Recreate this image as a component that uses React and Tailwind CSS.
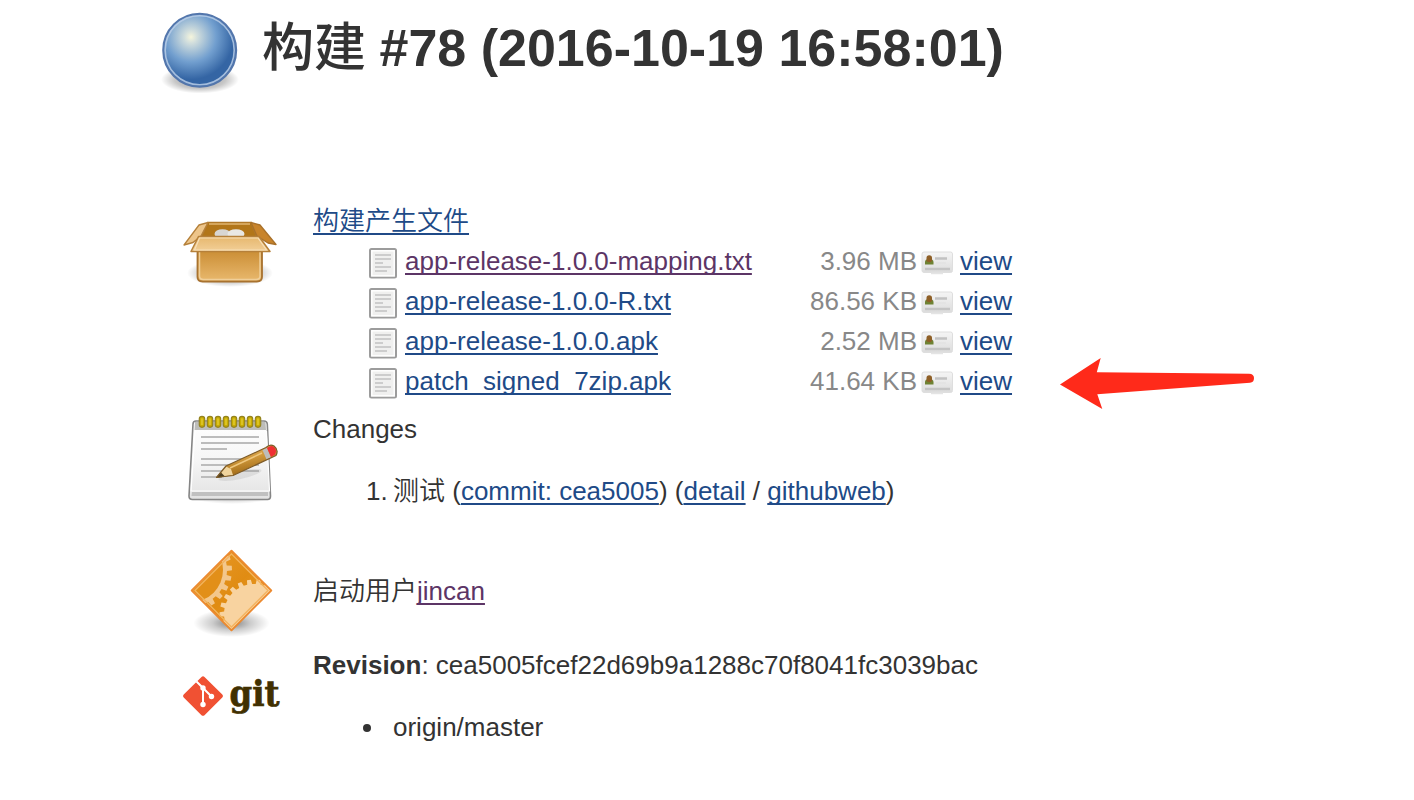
import React from "react";

const files = [
  { name: "app-release-1.0.0-mapping.txt", size: "3.96 MB", visited: true },
  { name: "app-release-1.0.0-R.txt", size: "86.56 KB" },
  { name: "app-release-1.0.0.apk", size: "2.52 MB" },
  { name: "patch_signed_7zip.apk", size: "41.64 KB" },
];

function Link({ children, visited }) {
  return (
    <a
      href="#"
      className={
        "underline decoration-2 underline-offset-[3px] [text-decoration-skip-ink:none] " +
        (visited ? "text-[#5c3566]" : "text-[#204a87]")
      }
    >
      {children}
    </a>
  );
}

function BallIcon() {
  return (
    <svg width="80" height="88" viewBox="160 8 80 88" className="block shrink-0">
      <defs>
        <radialGradient id="ball" cx="191" cy="37" r="50" gradientUnits="userSpaceOnUse">
          <stop offset="0" stopColor="#f5f5dc" />
          <stop offset="0.12" stopColor="#d3dfdd" />
          <stop offset="0.5" stopColor="#729fcf" />
          <stop offset="0.85" stopColor="#3465a4" />
          <stop offset="1" stopColor="#3465a4" />
        </radialGradient>
        <radialGradient id="ballShade">
          <stop offset="0" stopColor="#000" stopOpacity="0.4" />
          <stop offset="0.65" stopColor="#000" stopOpacity="0.22" />
          <stop offset="1" stopColor="#000" stopOpacity="0" />
        </radialGradient>
      </defs>
      <ellipse cx="200" cy="79.500" rx="39" ry="14" fill="url(#ballShade)" />
      <circle cx="199.700" cy="50.200" r="36.500" fill="url(#ball)" stroke="#5376ac" strokeWidth="2" />
      <circle cx="199.700" cy="50.200" r="34.500" fill="none" stroke="#b9cde6" strokeOpacity="0.85" strokeWidth="1.600" />
    </svg>
  );
}

function BoxIcon() {
  return (
    <svg width="100" height="76" viewBox="180 214 100 76" className="block">
      <defs>
        <linearGradient id="boxFront" x1="0" y1="0" x2="0" y2="1">
          <stop offset="0" stopColor="#c88a30" />
          <stop offset="1" stopColor="#e9b96e" />
        </linearGradient>
        <linearGradient id="boxFlap" x1="0" y1="0" x2="0" y2="1">
          <stop offset="0" stopColor="#e6b76d" />
          <stop offset="1" stopColor="#f2cf98" />
        </linearGradient>
        <radialGradient id="boxShade">
          <stop offset="0" stopColor="#000" stopOpacity="0.5" />
          <stop offset="0.65" stopColor="#000" stopOpacity="0.2" />
          <stop offset="1" stopColor="#000" stopOpacity="0" />
        </radialGradient>
      </defs>
      <ellipse cx="230" cy="273" rx="43" ry="14" fill="url(#boxShade)" />
      <path d="M208 222.500H251L257 238H201Z" fill="#b27619" stroke="#b07828" strokeWidth="1.500" />
      <path d="M209 224H250" stroke="#e0b671" strokeWidth="1.500" />
      <ellipse cx="222.500" cy="234" rx="8" ry="4.800" fill="#d8d6d2" />
      <ellipse cx="236" cy="234" rx="8.500" ry="4.800" fill="#e9e8e4" />
      <path d="M251 222.500L260 225L276 244.500L268 243L257 236Z" fill="#c8842b" stroke="#a9712a" strokeWidth="1.300" strokeLinejoin="round" />
      <path d="M208 222.500L199 225L184 245L193 242.500L201 236Z" fill="#edc58a" stroke="#b5803a" strokeWidth="1.300" strokeLinejoin="round" />
      <path d="M197.500 248H262V277Q262 281.500 257 281.500H202.500Q197.500 281.500 197.500 277Z" fill="url(#boxFront)" stroke="#a8722f" strokeWidth="1.800" />
      <path d="M199.500 252V276Q199.500 279.500 203.500 279.500H256Q260 279.500 260 276V252" fill="none" stroke="#f0cf99" strokeWidth="1.500" />
      <path d="M198.500 236.500H259L270 251.500H191Z" fill="url(#boxFlap)" stroke="#b5803a" strokeWidth="1.500" strokeLinejoin="round" />
      <path d="M199.500 238H258L266.500 250H194.500Z" fill="none" stroke="#f7dfb8" strokeWidth="1.200" />
    </svg>
  );
}

function NotepadIcon() {
  return (
    <svg width="100" height="100" viewBox="180 407 100 100" className="block">
      <defs>
        <linearGradient id="paper" x1="0" y1="0" x2="0" y2="1">
          <stop offset="0" stopColor="#fff" />
          <stop offset="0.5" stopColor="#f6f6f6" />
          <stop offset="1" stopColor="#e2e2e2" />
        </linearGradient>
        <linearGradient id="pencil" x1="0" y1="0" x2="0.350" y2="1">
          <stop offset="0" stopColor="#e9bb6b" />
          <stop offset="0.5" stopColor="#d19a3d" />
          <stop offset="1" stopColor="#9a6412" />
        </linearGradient>
        <radialGradient id="padShade">
          <stop offset="0" stopColor="#000" stopOpacity="0.25" />
          <stop offset="1" stopColor="#000" stopOpacity="0" />
        </radialGradient>
      </defs>
      <ellipse cx="232" cy="497" rx="40" ry="7" fill="url(#padShade)" />
      <path d="M196 421H264Q267 421 267.300 424L270.500 496Q270.500 499.500 267.500 499.500H192.500Q189 499.500 189 496L193 424Q193 421 196 421Z" fill="url(#paper)" stroke="#858585" strokeWidth="1.600" />
      <path d="M195 422H265.500L266 430H194.500Z" fill="#bdbdba" />
      <path d="M192 492H268V496H191.500Z" fill="#c0c0c0" />
      <path d="M195 431L191 491H269.500L266.500 431" fill="none" stroke="#fff" strokeWidth="1.200" />
      <g stroke="#bcbcbc" strokeWidth="2">
        <path d="M201 437H259M201 443H259M201 449H227M201 459H259M201 465H259M201 471H259M201 477H222" />
      </g>
      {[202, 210, 218, 226, 234, 242, 250, 258].map((x) => (
        <g key={x}>
          <rect x={x - 2.7} y="416.300" width="5.400" height="11" rx="2.700" fill="#c9ac00" stroke="#94831f" strokeWidth="1.200" />
          <path d={`M${x} 418.500V425`} stroke="#e3cd36" strokeWidth="1.400" />
        </g>
      ))}
      <ellipse cx="240" cy="475" rx="22" ry="4" fill="#777" opacity="0.15" transform="rotate(-12 240 475)" />
      <path d="M216.500 477.500L226 466L266 447.500Q270 443.500 274 446Q279 450 276 455.500L233 475.500Z" fill="url(#pencil)" />
      <path d="M216.500 477.500L226 466.500L231 469L233 475Z" fill="#f0d49d" />
      <path d="M216 478L220.500 472L225 476.500Z" fill="#4a3d20" />
      <path d="M262.500 450L267 447.800L271 457.500L266.500 459.500Z" fill="#bdbdbb" />
      <path d="M267 448Q271 444.500 274 447Q277.500 450 275 454.500L271 457Z" fill="#ef2f32" />
      <path d="M216.500 477.500L226 466L266 447.500Q270 443.500 274 446Q279 450 276 455.500L233 475.500Z" fill="none" stroke="#7d5b28" strokeWidth="1.200" strokeLinejoin="round" />
      <path d="M230 468L262 453" stroke="#efc77e" strokeWidth="1.500" />
    </svg>
  );
}

// Outline of a toothed wheel centred on (cx, cy).
function gearPath(cx, cy, inner, outer, teeth, phase) {
  const points = [];
  for (let i = 0; i < teeth; i += 1) {
    const step = (Math.PI * 2) / teeth;
    const a = i * step + phase;
    [
      [0, inner],
      [0.42, inner],
      [0.5, outer],
      [0.9, outer],
    ].forEach(([t, r]) => {
      points.push(`${(cx + r * Math.cos(a + t * step)).toFixed(2)} ${(cy + r * Math.sin(a + t * step)).toFixed(2)}`);
    });
  }
  return `M${points.join("L")}Z`;
}

function GearsIcon() {
  return (
    <svg width="100" height="94" viewBox="180 546 100 94" className="block">
      <defs>
        <clipPath id="diamond">
          <path d="M231.500 552L270 590.500L231.500 629L193 590.500Z" />
        </clipPath>
        <linearGradient id="amber" x1="0" y1="0" x2="1" y2="1">
          <stop offset="0" stopColor="#e99a2c" />
          <stop offset="0.5" stopColor="#e08c13" />
          <stop offset="1" stopColor="#f0a23b" />
        </linearGradient>
        <radialGradient id="gearShade">
          <stop offset="0" stopColor="#000" stopOpacity="0.5" />
          <stop offset="0.5" stopColor="#000" stopOpacity="0.2" />
          <stop offset="1" stopColor="#000" stopOpacity="0" />
        </radialGradient>
      </defs>
      <ellipse cx="231.500" cy="623" rx="38" ry="14" fill="url(#gearShade)" />
      <path d="M231.500 550.800L271.200 590.500L231.500 630.200L191.800 590.500Z" fill="url(#amber)" stroke="#ec8a30" strokeWidth="2" strokeLinejoin="round" />
      <g clipPath="url(#diamond)">
        <path d={gearPath(191, 570, 36, 41, 24, 0.03)} fill="#f3c78c" />
        <circle cx="191" cy="570" r="32" fill="#e28f19" />
        <path d={gearPath(254, 614, 30, 34.5, 22, 0.08)} fill="#f8d3a0" />
      </g>
      <path d="M231.500 554L268 590.500L231.500 627L195 590.500Z" fill="none" stroke="#f3b35f" strokeWidth="1.300" />
    </svg>
  );
}

function GitLogo() {
  return (
    <svg width="110" height="64" viewBox="180 663 110 64" className="block">
      <path d="M201.500 677Q203 675.500 204.500 677L222.300 694.500Q223.800 696 222.300 697.500L204.500 715.200Q203 716.500 201.500 715.200L183.700 697.500Q182.200 696 183.700 694.500Z" fill="#f05133" />
      <g stroke="#fff" strokeWidth="2" fill="none">
        <path d="M196.500 681.500L203 688V704M203 688L211.500 696.500" />
      </g>
      <circle cx="203" cy="688" r="2.700" fill="#fff" />
      <circle cx="203" cy="704.500" r="2.700" fill="#fff" />
      <circle cx="211.500" cy="696.500" r="2.700" fill="#fff" />
      <text x="229.500" y="706" textLength="50" lengthAdjust="spacingAndGlyphs" fill="#413000" stroke="#413000" strokeWidth="0.700" className="font-['DejaVu_Serif',serif] text-[35px] leading-[40px] font-bold">
        git
      </text>
    </svg>
  );
}

function DocumentIcon() {
  return (
    <svg width="28" height="32" viewBox="0 0 28 32" className="block">
      <rect x="1" y="2" width="26" height="28.500" rx="1.500" fill="#f0f0ef" stroke="#9c9c9c" strokeWidth="2" />
      <rect x="2.800" y="3.800" width="22.400" height="25" fill="none" stroke="#fff" strokeWidth="1.400" />
      <path d="M6 8H22M6 12H22M6 16H14M6 20H22M6 24H18" stroke="#cdcdcd" strokeWidth="2" />
    </svg>
  );
}

function FingerprintIcon() {
  return (
    <svg width="32" height="24" viewBox="0 0 32 24" className="block">
      <defs>
        <linearGradient id="card" x1="0" y1="0" x2="0" y2="1">
          <stop offset="0" stopColor="#f5f5f5" />
          <stop offset="1" stopColor="#dcdcdc" />
        </linearGradient>
      </defs>
      <rect x="1" y="1" width="30.500" height="20.500" rx="2" fill="url(#card)" stroke="#dedede" />
      <path d="M10 22.500H22" stroke="#e4e4e4" strokeWidth="1.500" />
      <path d="M4 13.500V11Q4 8 8 8Q12.500 8 12.500 11V13.500Z" fill="#6f8232" />
      <path d="M5.500 10V7Q5.500 4.300 8.200 4.300Q11 4.300 11 7V10Q8.200 12.500 5.500 10Z" fill="#8e5f27" />
      <path d="M14 7.500H26" stroke="#c2c2c2" strokeWidth="2.500" />
      <path d="M15 12H25" stroke="#e2e2e2" strokeWidth="1.500" />
      <path d="M4 18H29" stroke="#c4c4c4" strokeWidth="2.500" />
    </svg>
  );
}

function Section({ icon, className, children }) {
  return (
    <section className={"flex " + className}>
      <div className="w-[133px] shrink-0">{icon}</div>
      <div className="grow">{children}</div>
    </section>
  );
}

export default function App() {
  return (
    <main className="relative h-[800px] w-[1414px] overflow-hidden bg-white font-['Liberation_Sans','Noto_Sans_CJK_SC',sans-serif] text-[26px] leading-[40px] text-[#333]">
      <header className="flex h-[201px] items-start pt-2 pl-[160px]">
        <BallIcon />
        <h1 className="ml-[22px] text-[52px] leading-[80px] font-bold whitespace-pre">
          <span className="-mr-px font-medium">构建</span> #78 (2016-10-19 16:58:01)
        </h1>
      </header>

      <div className="pl-[180px]">
        <Section className="h-[208px]" icon={<div className="pt-[13px]"><BoxIcon /></div>}>
          <div className="h-10 font-[350]">
            <Link>构建产生文件</Link>
          </div>
          <ul className="pl-[56px]">
            {files.map((file) => (
              <li key={file.name} className="flex h-10 items-center">
                <div className="mt-1 w-9"><DocumentIcon /></div>
                <div className="w-[360px]"><Link visited={file.visited}>{file.name}</Link></div>
                <div className="w-[152px] text-right text-[#888]">{file.size}</div>
                <div className="mt-1 ml-1 w-[39px]"><FingerprintIcon /></div>
                <Link>view</Link>
              </li>
            ))}
          </ul>
        </Section>

        <Section className="h-[132px]" icon={<div className="-mt-0.5"><NotepadIcon /></div>}>
          <div>Changes</div>
          <ol className="mt-[22px] pl-[53px]">
            <li className="flex">
              <span className="w-[27px]">1.</span>
              <span>
                <span className="font-[350]">测试</span> (<Link>commit: cea5005</Link>) (<Link>detail</Link> / <Link>githubweb</Link>)
              </span>
            </li>
          </ol>
        </Section>

        <Section className="h-[104px]" icon={<div className="pt-[5px]"><GearsIcon /></div>}>
          <div className="pt-[30px]">
            <span className="font-[350]">启动用户</span><Link visited>jincan</Link>
          </div>
        </Section>

        <Section className="h-[110px]" icon={<div className="pt-[18px]"><GitLogo /></div>}>
          <div>
            <b>Revision</b>: cea5005fcef22d69b9a1288c70f8041fc3039bac
          </div>
          <ul className="mt-[22px] pl-[50px]">
            <li className="flex items-center">
              <span className="mt-0.5 mr-[22px] size-2 rounded-full bg-[#333]" />
              origin/master
            </li>
          </ul>
        </Section>
      </div>

      <svg width="200" height="56" viewBox="1058 355 200 56" className="absolute top-[355px] left-[1058px]">
        <path d="M1060 384.500L1100.700 358L1096.800 372.300L1249 373.800Q1254 374 1254 378Q1254 382.500 1250 382.700L1097.300 394.300L1102.300 409Z" fill="#ff2a1a" />
      </svg>
    </main>
  );
}
